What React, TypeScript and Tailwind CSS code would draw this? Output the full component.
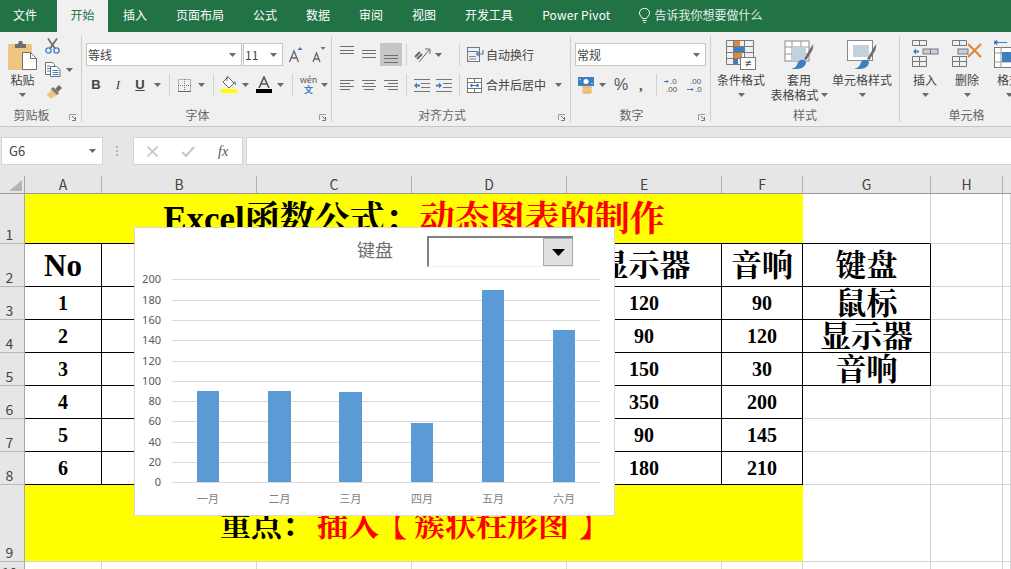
import React from "react";

const G = "#7a7a7a";
const B = "#3f7fbf";
const O = "#d98a3a";

function Caret({ className = "" }: { className?: string }) {
  return (
    <svg width="7" height="4" viewBox="0 0 7 4" className={`shrink-0 ${className}`}>
      <path d="M0 0h7L3.5 4z" fill="#6a6a6a" />
    </svg>
  );
}

function Sep({ className = "" }: { className?: string }) {
  return <div className={`w-px h-[22px] bg-[#d2d2d2] shrink-0 ${className}`} />;
}

function Launcher() {
  return (
    <svg width="8" height="7" viewBox="0 0 8 7" className="absolute right-[4px] bottom-[1px]">
      <path d="M0.5 6V0.5H7" fill="none" stroke="#9a9a9a" />
      <path d="M3 2l3 3M6.5 3v3.5H3" fill="none" stroke="#777" />
    </svg>
  );
}

function Group({ w, label, launcher, children }: { w: string; label: string; launcher?: boolean; children: React.ReactNode }) {
  return (
    <section className={`relative flex flex-col h-[86px] shrink-0 border-r border-[#cfcfcf] ${w}`}>
      <div className="h-[72px]">{children}</div>
      <div className={`h-[14px] leading-[14px] text-[12px] text-[#666] text-center ${launcher ? "pr-[18px]" : ""}`}>{label}</div>
      {launcher && <Launcher />}
    </section>
  );
}

function Lines({ rows, w = 14, h = 22, color = "#6f6f6f" }: { rows: number[][]; w?: number; h?: number; color?: string }) {
  return (
    <svg width={w} height={h} viewBox={`0 0 ${w} ${h}`} className="shrink-0">
      {rows.map((r, i) => (
        <rect key={i} x={r[0]} y={r[2]} width={r[1] - r[0]} height="1" fill={color} />
      ))}
    </svg>
  );
}

function Paste() {
  return (
    <svg width="29" height="30" viewBox="0 0 29 30">
      <rect x="0" y="4" width="24" height="26" rx="1.5" fill="#eec684" />
      <path d="M7 4h3l1-3h3l1 3h3v4H7z" fill="#6f6f6f" />
      <path d="M14.5 12.5h8l6 6v11h-14z" fill="#fff" stroke="#6f6f6f" />
      <path d="M22.5 12.5v6h6" fill="none" stroke="#6f6f6f" />
    </svg>
  );
}

function Scissors() {
  return (
    <svg width="15" height="16" viewBox="0 0 15 16">
      <path d="M3 0.5l7 10M12 0.5l-7 10" stroke="#707070" strokeWidth="1.8" fill="none" />
      <circle cx="3.5" cy="12.5" r="2.6" fill="none" stroke={B} strokeWidth="1.3" />
      <circle cx="11.5" cy="12.5" r="2.6" fill="none" stroke={B} strokeWidth="1.3" />
    </svg>
  );
}

function CopyIcon() {
  return (
    <svg width="16" height="15" viewBox="0 0 16 15">
      <path d="M0.5 0.5h7l2 2v10h-9z" fill="#fff" stroke="#6f6f6f" />
      <path d="M5.5 4.5h6l3.5 3v7H5.5z" fill="#fff" stroke="#6f6f6f" />
      <path d="M2 4h3M2 6.5h3M2 9h3M7.5 8.5h6M7.5 10.5h6M7.5 12.5h6" stroke={B} />
    </svg>
  );
}

function Brush() {
  return (
    <svg width="18" height="16" viewBox="0 0 18 16">
      <path d="M10 5l4-4 3 3-4 4z" fill="#6f6f6f" />
      <path d="M8 3l6 6-3 3-3 1-2 2-5-5 3-1 2-3z" fill="#eec684" />
      <path d="M8 3l6 6-2 2-6-6z" fill="#7a7a7a" />
    </svg>
  );
}

function BigA({ up }: { up: boolean }) {
  return (
    <svg width="14" height="16" viewBox="0 0 14 16">
      <path d={up ? "M0.5 15L5 4l4.5 11M2.2 11h5.6" : "M1 15L4.5 6 8 15M2.2 12h4.6"} fill="none" stroke="#666" strokeWidth="1.3" />
      <path d={up ? "M8.5 3l2.5-3 2.5 3z" : "M8.5 0h5L11 3z"} fill={B} />
    </svg>
  );
}

function BorderIcon() {
  return (
    <svg width="13" height="13" viewBox="0 0 13 13">
      <path d="M0.5 0.5h12v12h-12zM6.5 0v13M0 6.5h13" fill="none" stroke="#777" strokeDasharray="1 1" />
      <rect x="0" y="12" width="13" height="1" fill="#666" />
    </svg>
  );
}

function FillIcon() {
  return (
    <svg width="16" height="18" viewBox="0 0 16 18">
      <path d="M7 1l6 6-5 5-6-6z" fill="#fff" stroke="#666" />
      <path d="M6 0v5" stroke="#666" />
      <path d="M13 5c2 1 2.500 3 2 4-1 0-2-2-2-4z" fill={B} />
      <rect x="0" y="13" width="16" height="4" fill="#ffff00" />
    </svg>
  );
}

function FontColor() {
  return (
    <svg width="16" height="18" viewBox="0 0 16 18">
      <path d="M3 12L8 1l5 11M4.800 8h6.400" fill="none" stroke="#555" strokeWidth="1.6" />
      <rect x="0" y="13" width="16" height="4" fill="#000" />
    </svg>
  );
}

function Orientation() {
  return (
    <svg width="17" height="17" viewBox="0 0 17 17">
      <path d="M1 11l5-5M3 13l5-5" stroke="#666" strokeWidth="2" />
      <path d="M5 16L15 4" stroke="#666" />
      <path d="M11 3h5v5" fill="none" stroke="#666" />
    </svg>
  );
}

function WrapIcon() {
  return (
    <svg width="17" height="15" viewBox="0 0 17 15">
      <rect x="0.5" y="0.5" width="12" height="14" fill="none" stroke="#777" />
      <path d="M0 4.500h11" stroke={B} />
      <path d="M2 9.500h7M2 12h7" stroke="#888" />
      <path d="M16 3v4h-6M12 5l-2.500 2 2.500 2" fill="none" stroke={B} strokeWidth="1.2" />
    </svg>
  );
}

function MergeIcon() {
  return (
    <svg width="15" height="15" viewBox="0 0 15 15">
      <rect x="0.500" y="0.500" width="14" height="14" fill="#fff" stroke="#777" />
      <path d="M0 4.500h15M0 10.500h15M7.500 0v4M7.500 11v4" stroke="#777" />
      <path d="M3 7.500h9M3 7.500l2-1.500v3zM12 7.500l-2-1.500v3z" stroke={B} fill={B} />
    </svg>
  );
}

function IndentIcon({ out }: { out: boolean }) {
  return (
    <svg width="16" height="13" viewBox="0 0 16 13">
      <path d="M0 0.500h16M7 4.500h9M7 8.500h9M0 12.500h16" stroke="#777" />
      {out ? <path d="M0 6.500l3-3v2h3v2H3v2z" fill={B} /> : <path d="M6 6.500l-3-3v2H0v2h3v2z" fill={B} />}
    </svg>
  );
}

function Currency() {
  return (
    <svg width="17" height="17" viewBox="0 0 17 17">
      <rect x="0" y="0" width="16" height="9" fill={B} />
      <circle cx="8" cy="4.500" r="2.500" fill="#fff" />
      <path d="M2 2v1M14 6v1" stroke="#fff" />
      <ellipse cx="9" cy="10.500" rx="5" ry="1.700" fill="#e8bd74" />
      <ellipse cx="9" cy="13" rx="5" ry="1.700" fill="#eec684" />
      <ellipse cx="9" cy="15.300" rx="5" ry="1.700" fill="#e8bd74" />
    </svg>
  );
}

function CondFormat() {
  return (
    <svg width="30" height="30" viewBox="0 0 30 30">
      <path d="M0.500 0.500h27v24h-27zM0.500 6.500h27M0.500 12.500h27M0.500 18.500h27M7.500 0v25M18.500 0v25" fill="none" stroke={G} />
      <rect x="8" y="1" width="6" height="5" fill={O} />
      <rect x="8" y="7" width="11" height="5" fill={B} />
      <rect x="8" y="13" width="8" height="5" fill={O} />
      <rect x="8" y="19" width="4" height="5" fill={B} />
      <rect x="14.500" y="17.500" width="15" height="12" fill="#fff" stroke={G} />
      <text x="22" y="27" textAnchor="middle" fontSize="11" fill="#444" fontFamily="Liberation Sans">≠</text>
    </svg>
  );
}

function TableFormat({ fillAll }: { fillAll: boolean }) {
  return (
    <svg width="30" height="30" viewBox="0 0 30 30">
      {fillAll ? (
        <>
          <rect x="1" y="1" width="24" height="20" fill="#fff" stroke="#888" />
          <path d="M1 7h24M1 14h24M8 1v20M17 1v20" stroke="#999" />
          <rect x="8" y="7" width="14" height="14" fill="#c3d0dd" />
        </>
      ) : (
        <>
          <rect x="0.500" y="0.500" width="25" height="20" fill="#fff" stroke="#888" />
          <rect x="6" y="5" width="16" height="12" fill="#c3d0dd" />
        </>
      )}
      <path d="M20 19l7-12 2.500-3-1 6-6 10z" fill="#6f6f6f" />
      <path d="M14 22c3-3 6-3 8 0 0 3-3 7-9 7H7c4-1 6-3 7-7z" fill={B} />
    </svg>
  );
}

function InsertCells() {
  return (
    <svg width="27" height="27" viewBox="0 0 27 27">
      <path d="M0.500 0.500h14v5h-14zM7.500 0v5M0.500 16.500h14v10h-14zM7.500 16v10M0 21.500h14" fill="none" stroke="#777" />
      <rect x="11" y="9" width="15" height="5" fill="#c3d0dd" stroke="#777" />
      <path d="M18.500 9v5" stroke="#777" />
      <path d="M1 11.500l3-3v2h3v2H4v2z" fill={B} />
    </svg>
  );
}

function DeleteCells() {
  return (
    <svg width="31" height="27" viewBox="0 0 31 27">
      <path d="M0.500 0.500h14v5h-14zM7.500 0v5M0.500 16.500h14v10h-14zM7.500 16v10M0 21.500h14" fill="none" stroke="#777" />
      <rect x="6" y="9" width="10" height="5" fill="#c3d0dd" stroke="#777" />
      <path d="M16 4l13 13M29 4L16 17" stroke={O} strokeWidth="2.200" />
    </svg>
  );
}

function FormatCells() {
  return (
    <svg width="30" height="30" viewBox="0 0 30 30">
      <path d="M0 0v5M0 2.500h13M0 2.500l3-2v4z" stroke={B} fill={B} />
      <rect x="0.500" y="7.500" width="28" height="20" fill="#fff" stroke="#777" />
      <path d="M7 7v21M0 13h29M0 22h29" stroke="#999" />
      <rect x="8" y="12" width="16" height="10" fill={B} />
    </svg>
  );
}

function BigButton({ w, icon, label, label2, caret = true }: { w: string; icon: React.ReactNode; label: string; label2?: string; caret?: boolean }) {
  return (
    <div className={`flex flex-col items-center pt-[4px] shrink-0 ${w}`}>
      <div className="h-[30px] flex justify-center">{icon}</div>
      <div className="mt-[2px] leading-[15px] text-[12px] text-[#444] whitespace-nowrap">{label}</div>
      {label2 ? (
        <div className="leading-[15px] text-[12px] text-[#444] whitespace-nowrap flex items-center">
          {label2}
          <Caret className="ml-[2px]" />
        </div>
      ) : (
        caret && (
          <div className="h-[15px] flex items-center">
            <Caret />
          </div>
        )
      )}
    </div>
  );
}

function Combo({ w, text, textClass = "" }: { w: string; text: string; textClass?: string }) {
  return (
    <div className={`h-[23px] bg-white border border-[#c6c6c6] flex items-center justify-between pl-[1px] pr-[5px] shrink-0 ${w}`}>
      <span className={`text-[12px] text-[#444] ${textClass}`}>{text}</span>
      <Caret />
    </div>
  );
}

function Tabs() {
  const tabs = ["页面布局", "公式", "数据", "审阅", "视图", "开发工具"];
  return (
    <div className="h-[32px] bg-[#217346] flex items-center pb-[2px] pl-[13px] gap-[29px] text-[12px] text-white shrink-0">
      <span>文件</span>
      <span className="-ml-[9px] -mr-[14px] w-[51px] -mb-[2px] h-[32px] leading-[30px] text-center bg-[#f0f0f0] text-[#217346]">开始</span>
      <span>插入</span>
      {tabs.map((t) => (
        <span key={t}>{t}</span>
      ))}
      <span className="tracking-[0.15px]">Power Pivot</span>
      <span className="-ml-[1px] flex items-center gap-[5px] text-[#e3efe8]">
        <svg width="11" height="15" viewBox="0 0 11 15">
          <path d="M3.500 10.500C2.500 8.500 0.500 7.500 0.500 5a5 4.700 0 0 1 10 0c0 2.500-2 3.500-3 5.500zM3.500 12.500h4M4.500 14.500h2" fill="none" stroke="#fff" />
        </svg>
        告诉我你想要做什么
      </span>
    </div>
  );
}

function Ribbon() {
  return (
    <div className="h-[95px] bg-[#f0f0f0] border-b border-[#c6c6c6] pt-[4px] flex shrink-0 overflow-hidden">
      <Group w="w-[82px]" label="剪贴板" launcher>
        <div className="flex">
          <BigButton w="w-[29px] ml-[8px]" icon={<Paste />} label="粘贴" />
          <div className="ml-[8px] pt-[2px] flex flex-col">
            <Scissors />
            <div className="mt-[8px] flex items-center">
              <CopyIcon />
              <Caret className="ml-[5px]" />
            </div>
            <div className="mt-[7px]">
              <Brush />
            </div>
          </div>
        </div>
      </Group>

      <Group w="w-[250px]" label="字体" launcher>
        <div className="flex items-center pl-[4px] pt-[7px]">
          <Combo w="w-[156px]" text="等线" />
          <Combo w="w-[40px] ml-[1px]" text="11" />
          <div className="ml-[6px]">
            <BigA up />
          </div>
          <div className="ml-[9px]">
            <BigA up={false} />
          </div>
        </div>
        <div className="flex items-center h-[22px] mt-[8px]">
          <span className="ml-[3px] w-[22px] text-center text-[13px] font-bold text-[#444] font-['Liberation_Sans',sans-serif]">B</span>
          <span className="w-[22px] text-center text-[13px] italic text-[#444] font-['Liberation_Serif',serif]">I</span>
          <span className="w-[22px] text-center text-[13px] font-bold underline text-[#444] font-['Liberation_Sans',sans-serif]">U</span>
          <Caret className="ml-[3px]" />
          <Sep className="ml-[8px]" />
          <div className="ml-[8px]">
            <BorderIcon />
          </div>
          <Caret className="ml-[7px]" />
          <Sep className="ml-[8px]" />
          <div className="ml-[7px]">
            <FillIcon />
          </div>
          <Caret className="ml-[5px]" />
          <div className="ml-[7px]">
            <FontColor />
          </div>
          <Caret className="ml-[5px]" />
          <Sep className="ml-[8px]" />
          <div className="ml-[8px] w-[15px] flex flex-col items-center text-[9px] leading-[10px]">
            <span className="text-[#555]">wén</span>
            <span className="text-[#3f7fbf] font-bold">文</span>
          </div>
          <Caret className="ml-[5px]" />
        </div>
      </Group>

      <Group w="w-[239px]" label="对齐方式" launcher>
        <div className="flex items-center pt-[7px] h-[30px]">
          <div className="ml-[8px]">
            <Lines h={23} rows={[[0, 14, 3], [0, 14, 7], [0, 14, 10]]} />
          </div>
          <div className="ml-[8px]">
            <Lines h={23} rows={[[0, 14, 7], [0, 14, 10], [0, 14, 14]]} />
          </div>
          <div className="ml-[4px] w-[22px] h-[23px] bg-[#c6c6c6] flex justify-center">
            <Lines h={23} rows={[[0, 14, 12], [0, 14, 15], [0, 14, 19]]} />
          </div>
          <Sep className="ml-[4px]" />
          <div className="ml-[7px]">
            <Orientation />
          </div>
          <Caret className="ml-[4px]" />
          <Sep className="ml-[17px]" />
          <div className="ml-[7px] flex items-center">
            <WrapIcon />
            <span className="ml-[2px] text-[12px] text-[#444]">自动换行</span>
          </div>
        </div>
        <div className="flex items-center h-[22px] mt-[8px]">
          <div className="ml-[8px]">
            <Lines rows={[[0, 14, 6], [0, 10, 9], [0, 14, 12], [0, 10, 15]]} />
          </div>
          <div className="ml-[8px]">
            <Lines rows={[[0, 14, 6], [2, 12, 9], [0, 14, 12], [2, 12, 15]]} />
          </div>
          <div className="ml-[8px]">
            <Lines rows={[[0, 14, 6], [4, 14, 9], [0, 14, 12], [4, 14, 15]]} />
          </div>
          <Sep className="ml-[8px]" />
          <div className="ml-[7px]">
            <IndentIcon out />
          </div>
          <div className="ml-[6px]">
            <IndentIcon out={false} />
          </div>
          <Sep className="ml-[7px]" />
          <div className="ml-[7px] flex items-center">
            <MergeIcon />
            <span className="ml-[4px] text-[12px] text-[#444]">合并后居中</span>
          </div>
          <Caret className="ml-[9px]" />
        </div>
      </Group>

      <Group w="w-[140px]" label="数字" launcher>
        <div className="pl-[4px] pt-[7px]">
          <Combo w="w-[131px]" text="常规" />
        </div>
        <div className="flex items-center h-[22px] mt-[8px]">
          <div className="ml-[7px]">
            <Currency />
          </div>
          <Caret className="ml-[4px]" />
          <span className="ml-[8px] w-[14px] text-center text-[16px] text-[#555] font-['Liberation_Sans',sans-serif]">%</span>
          <span className="ml-[11px] w-[5px] text-[15px] font-bold text-[#555] font-['Liberation_Serif',serif] leading-[12px]">,</span>
          <Sep className="ml-[12px]" />
          <svg width="16" height="16" viewBox="0 0 16 16" className="ml-[7px]">
            <path d="M0 4.500h4l-1.500-1.500M4 4.500l-1.500 1.500" fill="none" stroke={B} />
            <text x="6" y="7" fontSize="8" fill="#555" fontFamily="Liberation Sans">.0</text>
            <text x="2" y="15" fontSize="8" fill="#555" fontFamily="Liberation Sans">.00</text>
          </svg>
          <svg width="16" height="16" viewBox="0 0 16 16" className="ml-[7px]">
            <text x="3" y="7" fontSize="8" fill="#555" fontFamily="Liberation Sans">.00</text>
            <path d="M0 12.500h6l-1.500-1.500M6 12.500l-1.500 1.500" fill="none" stroke={B} />
            <text x="8" y="15" fontSize="8" fill="#555" fontFamily="Liberation Sans">.0</text>
          </svg>
        </div>
      </Group>

      <Group w="w-[189px]" label="样式">
        <div className="flex">
          <BigButton w="w-[50px] ml-[5px]" icon={<CondFormat />} label="条件格式" />
          <BigButton w="w-[58px] ml-[4px]" icon={<TableFormat fillAll />} label="套用" label2="表格格式" />
          <BigButton w="w-[60px] ml-[4px]" icon={<TableFormat fillAll={false} />} label="单元格样式" />
        </div>
      </Group>

      <Group w="w-[134px]" label="单元格">
        <div className="flex">
          <BigButton w="w-[40px] ml-[5px]" icon={<InsertCells />} label="插入" />
          <BigButton w="w-[40px] ml-[2px]" icon={<DeleteCells />} label="删除" />
          <BigButton w="w-[40px] ml-[2px]" icon={<FormatCells />} label="格式" />
        </div>
      </Group>
    </div>
  );
}

function FormulaBar() {
  return (
    <div className="h-[49px] bg-[#e6e6e6] pt-[10px] flex items-start shrink-0">
      <div className="ml-[1px] w-[102px] h-[28px] bg-white border border-[#d4d4d4] flex items-center justify-between pl-[7px] pr-[6px]">
        <span className="text-[13px] text-[#444]">G6</span>
        <Caret />
      </div>
      <div className="ml-[13px] w-[3px] h-[28px] flex flex-col justify-center gap-[2px]">
        <i className="block w-[2px] h-[2px] bg-[#b5b5b5]" />
        <i className="block w-[2px] h-[2px] bg-[#b5b5b5]" />
        <i className="block w-[2px] h-[2px] bg-[#b5b5b5]" />
      </div>
      <div className="ml-[14px] w-[110px] h-[28px] bg-white border border-[#d4d4d4] flex items-center">
        <svg width="11" height="11" viewBox="0 0 11 11" className="ml-[13px]">
          <path d="M0.500 0.500l10 10M10.500 0.500l-10 10" stroke="#c6c6c6" strokeWidth="1.600" />
        </svg>
        <svg width="14" height="11" viewBox="0 0 14 11" className="ml-[23px]">
          <path d="M1 6l4 4 8-9" fill="none" stroke="#c6c6c6" strokeWidth="2" />
        </svg>
        <span className="ml-[23px] text-[14px] italic text-[#555] font-['Liberation_Serif',serif]">fx</span>
      </div>
      <div className="ml-[3px] flex-1 h-[28px] bg-white border-y border-l border-[#d4d4d4]" />
    </div>
  );
}

const gridCols = "grid-cols-[25px_77px_155px_155px_155px_155px_81px_128px_72px_1fr]";
const gridRows = "grid-rows-[18px_50px_43px_33px_33px_33px_33px_33px_33px_77px_20px]";

function RowHead({ n }: { n: number }) {
  return (
    <div className="bg-[#e6e6e6] border-r border-b border-r-[#a6a6a6] border-b-[#b8b8b8] flex items-end justify-center pr-[5px] text-[14px] leading-[18px] text-[#444]">
      {n}
    </div>
  );
}

function ColHead({ c }: { c: string }) {
  return (
    <div className="bg-[#e6e6e6] border-r border-b border-r-[#b0b0b0] border-b-[#9a9a9a] flex items-end justify-center text-[14px] leading-[17px] text-[#444]">
      {c}
    </div>
  );
}

function Blank() {
  return <div className="border-r border-b border-[#d4d4d4] bg-white" />;
}

function Cell({ text, big }: { text?: string; big?: boolean }) {
  return (
    <div
      className={`bg-white border-r border-b border-black flex items-center justify-center font-bold text-black leading-none whitespace-nowrap font-['Liberation_Serif','Noto_Serif_CJK_SC','Noto_Sans_CJK_SC',serif] ${
        big ? "text-[31px]" : "text-[20px]"
      }`}
    >
      {text}
    </div>
  );
}

function Sheet() {
  const rows = [
    ["1", "120", "90", "鼠标"],
    ["2", "90", "120", "显示器"],
    ["3", "150", "30", "音响"],
    ["4", "350", "200"],
    ["5", "90", "145"],
    ["6", "180", "210"],
  ];
  return (
    <div className={`relative flex-1 overflow-hidden grid ${gridCols} ${gridRows}`}>
      <div className="bg-[#e6e6e6] border-r border-b border-r-[#a6a6a6] border-b-[#9a9a9a] flex items-start justify-end pt-[4px] pr-[2px]">
        <svg width="13" height="11" viewBox="0 0 13 11">
          <path d="M13 0v11H0z" fill="#b5b5b5" />
        </svg>
      </div>
      {["A", "B", "C", "D", "E", "F", "G", "H"].map((c) => (
        <ColHead key={c} c={c} />
      ))}
      <div className="bg-[#e6e6e6] border-b border-b-[#9a9a9a]" />

      <RowHead n={1} />
      <div className="col-span-6 bg-[#ffff00] border-b border-black flex items-center justify-center pt-[2px] text-[35px] leading-none font-bold whitespace-nowrap font-['Liberation_Serif','Noto_Serif_CJK_SC','Noto_Sans_CJK_SC',serif]">
        <span className="text-black">Excel函数公式：</span>
        <span className="text-[#ff0000]">动态图表的制作</span>
      </div>
      <div className="border-r border-b border-r-[#d4d4d4] border-b-black" />
      <Blank />
      <Blank />

      <RowHead n={2} />
      <Cell text="No" big />
      <Cell />
      <Cell />
      <Cell />
      <Cell text="显示器" big />
      <Cell text="音响" big />
      <Cell text="键盘" big />
      <Blank />
      <Blank />

      {rows.map((r, i) => (
        <React.Fragment key={r[0]}>
          <RowHead n={i + 3} />
          <Cell text={r[0]} />
          <Cell />
          <Cell />
          <Cell />
          <Cell text={r[1]} />
          <Cell text={r[2]} />
          {r[3] ? <Cell text={r[3]} big /> : <Blank />}
          <Blank />
          <Blank />
        </React.Fragment>
      ))}

      <RowHead n={9} />
      <div className="col-span-6 bg-[#ffff00] border-b border-[#d4d4d4] flex items-end justify-start pl-[195px] pb-[20px] text-[31px] leading-none font-bold whitespace-nowrap font-['Liberation_Serif','Noto_Serif_CJK_SC','Noto_Sans_CJK_SC',serif]">
        <span className="text-black">重点：</span>
        <span className="ml-[4px] text-[#ff0000]">插入</span>
        <span className="-ml-[3px] mr-[7px] text-[#ff0000]">【</span>
        <span className="text-[#ff0000]">簇状柱形图</span>
        <span className="ml-[10px] text-[#ff0000]">】</span>
      </div>
      <Blank />
      <Blank />
      <Blank />

      <RowHead n={10} />
      {Array.from({ length: 9 }, (_, i) => (
        <Blank key={i} />
      ))}

      <ChartPanel />
    </div>
  );
}

function ChartPanel() {
  const ticks = [200, 180, 160, 140, 120, 100, 80, 60, 40, 20, 0];
  const ox = 135;
  const oy = 270;
  const bars = [
    { l: "一月", x: 197, w: 22, top: 391 },
    { l: "二月", x: 268, w: 23, top: 391 },
    { l: "三月", x: 339, w: 23, top: 392 },
    { l: "四月", x: 411, w: 22, top: 423 },
    { l: "五月", x: 482, w: 22, top: 290 },
    { l: "六月", x: 553, w: 22, top: 330 },
  ];
  return (
    <div className="absolute left-[134px] top-[51px] w-[481px] h-[289px] bg-white border border-[#d9d9d9] overflow-hidden">
      <div className="h-[42px] flex items-start pt-[8px]">
        <span className="ml-[222px] w-[36px] text-[18px] leading-[26px] text-[#6f6f6f] whitespace-nowrap">键盘</span>
        <div className="ml-[34px] w-[146px] h-[31px] flex border-l-2 border-t-2 border-l-[#808080] border-t-[#808080] border-b border-b-[#eeeeee] bg-white">
          <div className="flex-1" />
          <div className="w-[30px] bg-[#dfe1e0] border border-[#a9a9a9] flex items-center justify-center">
            <svg width="13" height="7" viewBox="0 0 13 7">
              <path d="M0 0h13L6.500 7z" fill="#000" />
            </svg>
          </div>
        </div>
      </div>
      <svg width="479" height="245" viewBox="0 0 479 245" className="block">
        {ticks.map((t, i) => {
          const y = Math.round(279.4 + i * 20.28);
          return (
            <g key={t}>
              <rect x={172 - ox} y={y - oy} width="428" height="1" fill="#d9d9d9" />
              <text x={161 - ox} y={y - oy + 4} textAnchor="end" fontSize="11" fill="#595959" fontFamily="Noto Sans, sans-serif">
                {t}
              </text>
            </g>
          );
        })}
        {bars.map((b) => (
          <g key={b.l}>
            <rect x={b.x - ox} y={b.top - oy} width={b.w} height={482 - b.top} fill="#5b9bd5" />
            <text x={b.x + b.w / 2 - ox} y={503 - oy} textAnchor="middle" fontSize="11" fill="#7f7f7f" fontFamily="Noto Sans CJK SC, sans-serif">
              {b.l}
            </text>
          </g>
        ))}
      </svg>
    </div>
  );
}

export default function App() {
  return (
    <div className="w-[1011px] h-[569px] overflow-hidden flex flex-col bg-white font-['Noto_Sans_CJK_SC','Noto_Sans',sans-serif]">
      <Tabs />
      <Ribbon />
      <FormulaBar />
      <Sheet />
    </div>
  );
}
